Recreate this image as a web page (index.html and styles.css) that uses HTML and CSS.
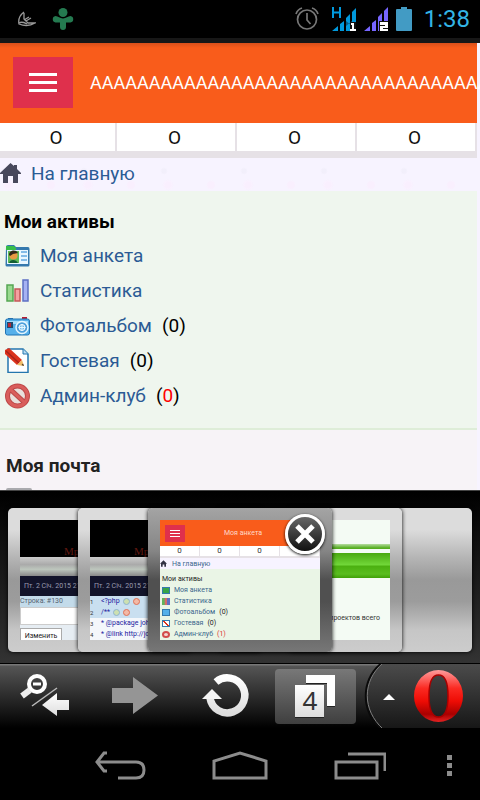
FILE: index.html
```html
<!DOCTYPE html>
<html lang="ru">
<head>
  <meta charset="UTF-8" />
  <meta name="viewport" content="width=device-width, initial-scale=1.0"/>
  <title>Моя анкета</title>
  <link rel="stylesheet" href="styles.css">
</head>
<body>

  <!-- Status bar -->
  <div class="status-bar">
    <svg class="status-bird" width="18" height="16" viewBox="0 0 18 16" fill="none" stroke="#999" stroke-width="1.3">
      <path d="M6 1C2 4 0 8 1 13C6 15 12 15 17 12H10L6 8V2M6 9L11 6M8 10L13 7"/>
      <path d="M1 12C4 10 7 12 9 13"/>
    </svg>
    <svg width="22" height="22" viewBox="0 0 22 22" fill="#247a50">
      <circle cx="11" cy="4.500" r="4.500"/>
      <path d="M3.500 8C6 8 8 10.500 11 10.500S16 8 18.500 8A3.300 3.300 0 0 1 18.500 14.500H14V19A3 3 0 0 1 8 19V14.500H3.500A3.300 3.300 0 0 1 3.500 8Z"/>
    </svg>
    <div class="status-right">
      <svg width="24" height="24" viewBox="0 0 24 24" fill="none" stroke="#777" stroke-width="1.700">
        <circle cx="12" cy="12.500" r="9.500"/>
        <path d="M12 6V13L15.500 17M1 7C2 4 4 2 7 1M23 7C22 4 20 2 17 1"/>
      </svg>
      <svg class="signal-first" width="24" height="24" viewBox="0 0 24 24" fill="#0099dd">
        <path d="M1 0V11M8 0V11M1 5.500H8" stroke="#0099dd" stroke-width="2"/>
        <path d="M0 24L6 19V24ZM8 17L12 14V24H8ZM14 11L18 7V24H14ZM20 5L24 1V24H20Z"/>
        <path d="M14 14L20 19V14L14 19Z" fill="#075d85"/>
        <path d="M18 15H24V24H18Z" fill="#111"/>
        <path d="M19 16H22V22H24V24H18V22H20V18H19Z" fill="#fff"/>
      </svg>
      <svg width="24" height="24" viewBox="0 0 24 24" fill="#7766ff">
        <path d="M0 24L6 19V24ZM8 16L12 13V24H8ZM14 10L18 6V24H14ZM20 4L24 0V24H20Z"/>
        <path d="M15 14H24V24H15Z" fill="#111"/>
        <path d="M16 15H24V21H19V22H24V24H16V19H21V18H16Z" fill="#fff"/>
      </svg>
      <svg width="16" height="24" viewBox="0 0 16 24" fill="#429bc4">
        <path d="M5 0H11V2H15Q16 2 16 3V23Q16 24 15 24H1Q0 24 0 23V3Q0 2 1 2H5Z"/>
      </svg>
      <span class="clock">1:38</span>
    </div>
  </div>

  <!-- Site -->
  <main class="page">
    <header class="header">
      <button class="menu-btn" type="button" aria-label="Меню">
        <span></span><span></span><span></span>
      </button>
      <h1>AAAAAAAAAAAAAAAAAAAAAAAAAAAAAAAAAAA</h1>
    </header>

    <nav class="counters">
      <a href="#">O</a>
      <a href="#">O</a>
      <a href="#">O</a>
      <a href="#">O</a>
    </nav>

    <div class="breadcrumb">
      <svg width="21" height="20" viewBox="0 0 21 20" fill="#48485c">
        <path d="M10.500 0L14 3V2H17V6L21 10V11H18V20H13V13H8V20H3V11H0V10Z"/>
      </svg>
      <a href="#">На главную</a>
    </div>

    <section class="block assets">
      <h2>Мои активы</h2>
      <ul>
        <li>
          <svg width="25" height="25" viewBox="0 0 25 25">
            <path d="M1 4Q1 2 3 2H9L11 4H23Q24.500 4 24.500 6V22Q24.500 23.500 23 23.500H2Q.5 23.500 .5 22Z" fill="#3579ad"/>
            <path d="M1 5V3H9L11 5V7H1Z" fill="#36bd49"/>
            <path d="M2 7H23V21H2Z" fill="#e9f7ff"/>
            <path d="M3 8H14V20H3Z" fill="#5dbb58"/>
            <circle cx="8.500" cy="12.500" r="4" fill="#e79a42"/>
            <path d="M4 12C4 7 11 6 13 10L8 11L5 13Z" fill="#332719"/>
            <path d="M4 20C5 16 11 16 13 20Z" fill="#135e33"/>
            <path d="M16 9H22M16 13H22M16 17H22" stroke="#83bce8" stroke-width="2"/>
          </svg>
          <a href="#">Моя анкета</a>
        </li>
        <li>
          <svg width="25" height="25" viewBox="0 0 25 25" stroke-width="1.500">
            <path d="M2 7H8V23H2Z" fill="#99d98f" stroke="#56a653"/>
            <path d="M10 11H15V23H10Z" fill="#f4a0a0" stroke="#c45858"/>
            <path d="M18 2H23V23H18Z" fill="#a6b2f3" stroke="#5e70c4"/>
          </svg>
          <a href="#">Статистика</a>
        </li>
        <li>
          <svg width="25" height="25" viewBox="0 0 25 25">
            <path d="M17 4H22V7H17Z" fill="#b81c32"/>
            <path d="M3 5H8V7H3Z" fill="#286ca6"/>
            <rect x=".5" y="6" width="24" height="16" rx="2" fill="#55b0ea" stroke="#2174b5"/>
            <path d="M2 8H23V11H2Z" fill="#a6dcfb"/>
            <path d="M2 9H8V15H2Z" fill="#20496d"/>
            <path d="M3 10H6V14H3Z" fill="#b32a38"/>
            <circle cx="17" cy="14.500" r="6" fill="#4d9fdb" stroke="#e5f7ff" stroke-width="1.500"/>
            <circle cx="17" cy="14.500" r="3" fill="#75bdeb" stroke="#fff"/>
            <path d="M17 11V18M13.500 14.500H20.500" stroke="#e5f7ff"/>
          </svg>
          <a href="#">Фотоальбом</a> <span class="count">(0)</span>
        </li>
        <li>
          <svg width="25" height="25" viewBox="0 0 25 25">
            <path d="M3 1H18L23 6V24.500H3Z" fill="#fff" stroke="#2476ae" stroke-width="1.500"/>
            <path d="M18 1V6H23" fill="#b9dcf2" stroke="#2476ae"/>
            <path d="M0 2L4 0L17 12L12 17L0 6Z" fill="#db321c"/>
            <path d="M1 3L14 15" stroke="#a8241b" stroke-width="1.500"/>
            <path d="M12 17L17 12L19 18Z" fill="#f0bd68"/>
            <path d="M16.500 17L18 15.500L19 18Z" fill="#44342a"/>
          </svg>
          <a href="#">Гостевая</a> <span class="count">(0)</span>
        </li>
        <li>
          <svg width="25" height="26" viewBox="0 0 25 26">
            <circle cx="12.500" cy="13" r="10" fill="#e8e0dc" stroke="#bd4848" stroke-width="5"/>
            <path d="M6 7L19 19" stroke="#bd4848" stroke-width="5"/>
            <circle cx="12.500" cy="13" r="10" fill="none" stroke="#d95e5c" stroke-width="3"/>
            <path d="M6 7L19 19" stroke="#d95e5c" stroke-width="3"/>
          </svg>
          <a href="#">Админ-клуб</a> <span class="count">(<b>0</b>)</span>
        </li>
      </ul>
    </section>

    <section class="block mail">
      <h2>Моя почта</h2>
      <svg width="26" height="25" viewBox="0 0 26 25">
        <rect x="1" y="1" width="24" height="23" rx="1" fill="#eeeef0" stroke="#aaaaae" stroke-width="2"/>
      </svg>
    </section>
  </main>

  <!-- Open tabs -->
  <div class="tabs">
    <div class="card card-1">
      <div class="thumb thumb-forum">
        <div class="logo">Мр</div>
        <div class="strip"></div>
        <div class="date">Пт. 2 Січ. 2015 21</div>
        <div class="line-no">Строка: #130</div>
        <div class="box"></div>
        <div class="edit">Изменить</div>
      </div>
    </div>
    <div class="card card-2">
      <div class="thumb thumb-forum">
        <div class="logo">Мр</div>
        <div class="strip"></div>
        <div class="date">Пт. 2 Січ. 2015 21</div>
        <div class="code"><i>1</i>&lt;?php <em class="down"></em><em class="del"></em></div>
        <div class="code"><i>2</i>/** <em class="down"></em><em class="del"></em></div>
        <div class="code"><i>3</i>* @package joh</div>
        <div class="code"><i>4</i>* @link http://jo</div>
      </div>
    </div>
    <div class="card card-3">
      <div class="thumb thumb-profile">
        <div class="mini-header"><span class="mini-menu"></span><span class="mini-title">Моя анкета</span></div>
        <div class="mini-counters"><span>0</span><span>0</span><span>0</span><span></span></div>
        <div class="mini-home">
          <svg width="7" height="7" viewBox="0 0 21 20" fill="#333344"><path d="M10.500 0L21 11H18V20H13V13H8V20H3V11H0Z"/></svg>
          На главную
        </div>
        <p class="mini-heading">Мои активы</p>
        <p><em class="ic ic-card"></em>Моя анкета</p>
        <p><em class="ic ic-stat"></em>Статистика</p>
        <p><em class="ic ic-photo"></em>Фотоальбом <b>(0)</b></p>
        <p><em class="ic ic-pen"></em>Гостевая <b>(0)</b></p>
        <p><em class="ic ic-ban"></em>Админ-клуб <b class="red">(1)</b></p>
      </div>
      <button class="close-btn" type="button" aria-label="Закрыть">
        <svg width="20" height="20" viewBox="0 0 20 20" stroke="#fff" stroke-width="5"><path d="M2 2L18 18M18 2L2 18"/></svg>
      </button>
    </div>
    <div class="card card-4">
      <div class="thumb thumb-green">
        <div class="green-bar"></div>
        <p>проектов всего</p>
      </div>
    </div>
    <div class="card card-5"></div>
  </div>

  <!-- Browser toolbar -->
  <div class="toolbar">
    <button type="button" aria-label="Назад">
      <svg width="90" height="64" viewBox="0 0 90 64">
        <defs>
          <linearGradient id="white" x1="0" y1="0" x2="0" y2="1"><stop offset="0" stop-color="#fff"/><stop offset="1" stop-color="#ddd"/></linearGradient>
        </defs>
        <circle cx="37" cy="20" r="8" fill="none" stroke="#fff" stroke-width="4"/>
        <path d="M33 20H41" stroke="#fff" stroke-width="3"/>
        <path d="M30 26L22 32" stroke="#eee" stroke-width="6"/>
        <path d="M32 42L57 24" stroke="#bbb" stroke-width="1.500"/>
        <path d="M42 41L57 29V36H69V46H57V52Z" fill="url(#white)"/>
      </svg>
    </button>
    <button type="button" aria-label="Вперёд">
      <svg width="90" height="64" viewBox="0 0 90 64">
        <path d="M22 24H43V13L68 31.500L43 50V39H22Z" fill="#959595"/>
      </svg>
    </button>
    <button type="button" aria-label="Обновить">
      <svg width="90" height="64" viewBox="0 0 90 64">
        <path d="M30 34A17.500 17.500 0 1 0 36 18" fill="none" stroke="url(#white)" stroke-width="7.500"/>
        <path d="M22 35L32 25L42 35Z" fill="#f5f5f5"/>
      </svg>
    </button>
    <button type="button" aria-label="Вкладки">
      <svg width="90" height="64" viewBox="0 0 90 64">
        <defs>
          <linearGradient id="pressed" x1="0" y1="0" x2="0" y2="1"><stop offset="0" stop-color="#787878"/><stop offset="1" stop-color="#3f3f3f"/></linearGradient>
        </defs>
        <rect x="5" y="5" width="81" height="55" rx="4" fill="url(#pressed)"/>
        <path d="M36 12H65V43H57V20H36Z" fill="#222"/>
        <path d="M36 11H65V42H57V19H36Z" fill="#fff"/>
        <path d="M25 22H54V54H25Z" fill="#222"/>
        <path d="M25 21H54V53H25Z" fill="url(#white)"/>
        <text class="tab-count" x="40" y="46" text-anchor="middle">4</text>
      </svg>
    </button>
    <button class="opera-btn" type="button" aria-label="Меню Opera">
      <svg width="120" height="64" viewBox="0 0 120 64">
        <defs>
          <linearGradient id="panel" x1="0" y1="0" x2="0" y2="1"><stop offset="0" stop-color="#4c4c4c"/><stop offset="1" stop-color="#161616"/></linearGradient>
          <linearGradient id="opera" x1="0" y1="0" x2="0" y2="1"><stop offset="0" stop-color="#ff9c9c"/><stop offset=".35" stop-color="#fb2a22"/><stop offset=".6" stop-color="#ee0c05"/><stop offset=".85" stop-color="#a80000"/><stop offset="1" stop-color="#e62222"/></linearGradient>
        </defs>
        <path d="M19 0C0 16 0 48 19 64H122V0Z" fill="#0a0a0a"/>
        <path d="M23 -1C2 17 2 46 23 65H122V-1Z" fill="url(#panel)" stroke="#808080"/>
        <path d="M23 36L29 30L35 36Z" fill="#fff"/>
        <path d="M78.500 6A24.500 26 0 0 1 78.500 58A24.500 26 0 0 1 78.500 6ZM78.500 11C71 11 69 20 69 32S71 53 78.500 53S88 44 88 32S86 11 78.500 11Z" fill="url(#opera)" fill-rule="evenodd"/>
        <path d="M78.500 11C71 11 69 20 69 32S71 53 78.500 53S88 44 88 32S86 11 78.500 11Z" fill="none" stroke="#a80000" stroke-width="1.500"/>
      </svg>
    </button>
  </div>

  <!-- System buttons -->
  <nav class="system-nav">
    <button type="button" aria-label="Назад">
      <svg width="52" height="30" viewBox="0 0 52 30" fill="none" stroke="#8c8c8c" stroke-width="3">
        <path d="M13 2H10L3 11L10 20H13M4 11H42Q50 11 50 19T42 27H24"/>
      </svg>
    </button>
    <button type="button" aria-label="Домой">
      <svg width="56" height="30" viewBox="0 0 56 30" fill="none" stroke="#8c8c8c" stroke-width="3">
        <path d="M2 27V10L28 2L54 10V27Z"/>
      </svg>
    </button>
    <button type="button" aria-label="Недавние">
      <svg width="52" height="30" viewBox="0 0 52 30" fill="none" stroke="#8c8c8c" stroke-width="3">
        <path d="M2 11H43V27H2ZM14 3H51V20"/>
      </svg>
    </button>
    <button type="button" aria-label="Ещё">
      <svg width="6" height="22" viewBox="0 0 6 22" fill="#8c8c8c">
        <path d="M0 0H5V5H0ZM0 8H5V13H0ZM0 16H5V21H0Z"/>
      </svg>
    </button>
  </nav>

</body>
</html>
```
FILE: styles.css
```css
* {
  box-sizing: border-box;
}

body {
  margin: 0;
  height: 100vh;
  display: flex;
  flex-direction: column;
  overflow: hidden;
  background-color: #000;
  font-family: Roboto, 'Noto Sans', sans-serif;
  font-size: 19px;
}

h1, h2, p, ul {
  margin: 0;
  padding: 0;
}

button {
  padding: 0;
  border: none;
  background: none;
  cursor: pointer;
}

svg {
  display: block;
  flex-shrink: 0;
}

a {
  color: #2b5b95;
  text-decoration: none;
}

/* status bar */
.status-bar {
  display: flex;
  align-items: center;
  flex-shrink: 0;
  gap: 16px;
  height: 43px;
  padding: 0 10px 0 18px;
  border-bottom: 5px solid #171717;
}

.status-right {
  display: flex;
  align-items: center;
  gap: 8px;
  margin-left: auto;
}

.signal-first {
  margin-left: 5px;
}

.clock {
  margin-left: 4px;
  color: #33b5e5;
  font-size: 24px;
}

/* site */
.page {
  flex: 1;
  min-height: 0;
  overflow: hidden;
  padding-right: 3px;
  background-color: #f7f3ff;
}

.header {
  display: flex;
  align-items: center;
  gap: 17px;
  height: 80px;
  padding: 0 0 1px 13px;
  background: linear-gradient(#d9501b, #f95c1b 5px);
}

.header h1 {
  color: #fff;
  font-size: 18px;
  font-weight: 400;
  white-space: nowrap;
}

.menu-btn {
  display: flex;
  flex-direction: column;
  align-items: center;
  justify-content: center;
  flex-shrink: 0;
  gap: 5px;
  width: 60px;
  height: 51px;
  background-color: #df304c;
}

.menu-btn span {
  width: 28px;
  height: 3px;
  background-color: #fff;
}

.counters {
  display: grid;
  grid-template-columns: 117fr 120fr 120fr 120fr;
  border-bottom: 7px solid #e6e1e6;
}

.counters a {
  padding: 1px 3px 0 0;
  border-right: 2px solid #e6e1e6;
  background-color: #fff;
  color: #111;
  line-height: 27px;
  text-align: center;
}

.breadcrumb {
  display: flex;
  align-items: center;
  gap: 10px;
  height: 33px;
  padding-bottom: 3px;
  background-image:
    radial-gradient(circle at 4px 13px, #f2effb 2px, transparent 4px),
    radial-gradient(circle at 8px 27px, #f9effe 3px, transparent 6px),
    radial-gradient(circle at 51px 27px, #f9effe 3px, transparent 5px);
  background-size: 80px 33px;
}

.block h2 {
  font-size: 19px;
  line-height: 33px;
}

.assets {
  padding: 14px 4px 15px;
  border-bottom: 2px solid #deedd8;
  background-color: #eff6ee;
}

.assets ul {
  list-style: none;
}

.assets li {
  display: flex;
  align-items: center;
  height: 35px;
  padding-left: 1px;
}

.assets li a {
  margin-left: 10px;
}

.count {
  margin-left: 10px;
}

.count b {
  color: #f00;
  font-weight: 400;
}

.mail {
  height: 200px;
  padding: 19px 6px;
  background-color: #f7f3f7;
  color: #222;
}

.mail svg {
  margin-top: 6px;
}

/* open tabs */
.tabs {
  display: flex;
  justify-content: center;
  flex-shrink: 0;
  height: 174px;
  padding-top: 17px;
  border-top: 1px solid #444;
  background: linear-gradient(#000, #333);
}

.card {
  position: relative;
  flex-shrink: 0;
  width: 184px;
  height: 144px;
  padding: 12px;
  border-radius: 5px;
  background: linear-gradient(#dcdcdc 15%, #b4b4b4 35%, #999 50%, #9c9c9c 65%, #c6c6c6 85%, #ccc);
  box-shadow: 0 0 4px #000;
}

.card + .card {
  margin-left: -114px;
}

.card-2, .card-4 {
  z-index: 1;
}

.card-3 {
  z-index: 2;
  background: linear-gradient(#a4a4a4, #858585 30%, #505050 50%, #505050 65%, #777);
}

.thumb {
  height: 120px;
  overflow: hidden;
  font-size: 8px;
  white-space: nowrap;
}

.thumb-forum {
  background-color: #e6edf3;
  font-size: 7px;
}

.thumb-forum .logo {
  height: 37px;
  padding: 25px 0 0 44px;
  background-color: #000;
  color: #601810;
  font-family: 'Liberation Serif', serif;
  font-size: 11px;
  line-height: 12px;
}

.thumb-forum .strip {
  height: 19px;
  background: linear-gradient(#ccc, #aaa 40%, #bdc6bd 65%, #888);
}

.thumb-forum .date {
  padding-left: 4px;
  background-color: #12142a;
  color: #9a9cb0;
  line-height: 20px;
}

.thumb-forum .line-no {
  background-color: #c3dbea;
  color: #53626e;
  line-height: 11px;
}

.thumb-forum .box {
  height: 18px;
  border: 1px solid #ccc;
  background-color: #fff;
}

.thumb-forum .edit {
  width: 42px;
  margin-top: 3px;
  border: 1px solid #aaa;
  background-color: #fff;
  color: #222;
  line-height: 14px;
  text-align: center;
}

.thumb-forum .code {
  display: flex;
  align-items: center;
  gap: 3px;
  background-color: #f4f7fb;
  color: #2222a0;
  line-height: 11px;
}

.thumb-forum .code:nth-child(-n+5) {
  background-color: #c9dff0;
}

.thumb-forum .code i {
  width: 8px;
  color: #333;
  font-size: 6px;
  font-style: normal;
}

.code em {
  width: 7px;
  height: 7px;
  border: 1px solid #8fb4cf;
  border-radius: 50%;
  background-color: #cde0b0;
}

.code .del {
  border-color: #df7157;
  background-color: #f3b9a6;
}

.thumb-profile {
  background-color: #eaf5e6;
  color: #3b668c;
}

.mini-header {
  display: flex;
  align-items: center;
  height: 26px;
  padding-left: 5px;
  background-color: #f95c1b;
}

.mini-menu {
  width: 20px;
  height: 17px;
  padding: 5px;
  background: repeating-linear-gradient(#fff 0, #fff 1px, #df304c 1px, #df304c 3px) content-box, #df304c;
}

.mini-title {
  margin-left: 39px;
  color: #ffd9c9;
  font-size: 7px;
}

.mini-counters {
  display: grid;
  grid-template-columns: repeat(4, 1fr);
  border-bottom: 2px solid #e6e1e6;
  background-color: #fff;
  color: #333;
  line-height: 10px;
  text-align: center;
}

.mini-counters span {
  border-right: 1px solid #e6e1e6;
}

.mini-home {
  display: flex;
  align-items: center;
  gap: 5px;
  height: 11px;
  margin-bottom: 5px;
  background-color: #f7f3ff;
  font-size: 7px;
}

.thumb-profile p {
  display: flex;
  align-items: center;
  gap: 4px;
  padding-left: 2px;
  font-size: 7px;
  line-height: 11px;
}

.thumb-profile .mini-heading {
  color: #222;
}

.thumb-profile b {
  color: #222;
  font-weight: 400;
}

.thumb-profile .red {
  color: #d33;
}

.ic {
  width: 8px;
  height: 7px;
  border: 1px solid #3579ad;
  background-color: #37a447;
}

.ic-stat {
  border: none;
  background: linear-gradient(90deg, #62b35b 30%, #d66a6a 35%, #d66a6a 60%, #5e70c4 65%);
}

.ic-photo {
  background-color: #55b0ea;
}

.ic-pen {
  background: linear-gradient(45deg, #fff 40%, #db321c 40%, #db321c 60%, #fff 60%);
}

.ic-ban {
  border: 2px solid #d24c4c;
  border-radius: 50%;
  background-color: #f4d5d0;
}

.close-btn {
  position: absolute;
  top: 6px;
  right: 7px;
  display: flex;
  align-items: center;
  justify-content: center;
  width: 40px;
  height: 40px;
  border: 3px solid #fff;
  border-radius: 50%;
  background: linear-gradient(#666, #111);
  box-shadow: 0 1px 3px #000;
}

.thumb-green {
  padding-top: 24px;
  background-color: #f4fbf4;
  color: #333;
  text-align: right;
}

.green-bar {
  height: 34px;
  margin-bottom: 34px;
  background: linear-gradient(#b5dca0, #55ae20 4px, #55ae20 5px, #f4fbf4 5px, #f4fbf4 9px, #49a80f 9px, #72d83a 21px, #4bb010 22px, #5abd20 30px, #40a008);
}

.thumb-green p {
  padding-right: 10px;
  font-size: 7px;
  line-height: 12px;
}

/* browser toolbar */
.toolbar {
  display: grid;
  grid-template-columns: 3fr 3fr 3fr 3fr 4fr;
  flex-shrink: 0;
  height: 64px;
  background: linear-gradient(#777 1px, #555 2px, #000);
  box-shadow: 0 -1px #000;
}

.toolbar button {
  display: flex;
  justify-content: center;
  overflow: hidden;
}

.toolbar .opera-btn {
  justify-content: flex-end;
}

.tab-count {
  fill: #333;
  font-family: 'Noto Sans', sans-serif;
  font-size: 26px;
}

/* system buttons */
.system-nav {
  display: grid;
  grid-template-columns: 2fr 2fr 2fr 1fr;
  flex-shrink: 0;
  height: 72px;
  padding: 3px 0 0 12.5%;
}

.system-nav button {
  display: flex;
  align-items: center;
  justify-content: center;
}
```
